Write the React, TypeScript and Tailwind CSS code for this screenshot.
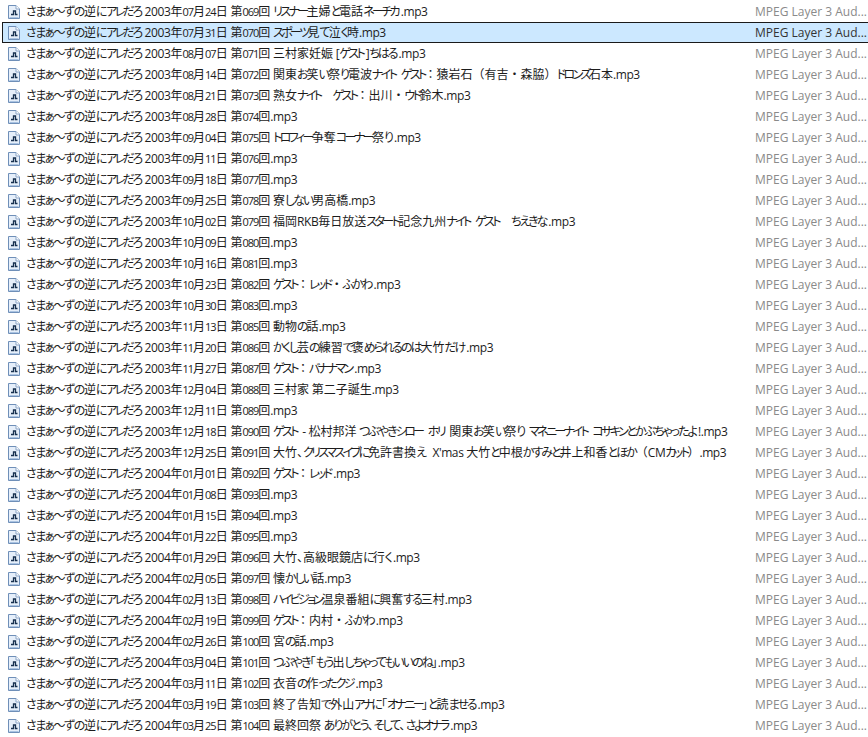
import React from "react";

const rows: [string, string, string][] = [
  ["2003年07月24日", "第069回", "リスナー主婦と電話ネーチカ"],
  ["2003年07月31日", "第070回", "スポーツ見て泣く時"],
  ["2003年08月07日", "第071回", "三村家妊娠 [ゲスト]ちはる"],
  ["2003年08月14日", "第072回", "関東お笑い祭り電波ナイト ゲスト：猿岩石（有吉・森脇）ドロンズ石本"],
  ["2003年08月21日", "第073回", "熟女ナイト　ゲスト：出川・ウド鈴木"],
  ["2003年08月28日", "第074回", ""],
  ["2003年09月04日", "第075回", "トロフィー争奪コーナー祭り"],
  ["2003年09月11日", "第076回", ""],
  ["2003年09月18日", "第077回", ""],
  ["2003年09月25日", "第078回", "寮しない男高橋"],
  ["2003年10月02日", "第079回", "福岡RKB毎日放送スタート記念九州ナイト ゲスト　ちえきな"],
  ["2003年10月09日", "第080回", ""],
  ["2003年10月16日", "第081回", ""],
  ["2003年10月23日", "第082回", "ゲスト：レッド・ふかわ"],
  ["2003年10月30日", "第083回", ""],
  ["2003年11月13日", "第085回", "動物の話"],
  ["2003年11月20日", "第086回", "かくし芸の練習で褒められるのは大竹だけ"],
  ["2003年11月27日", "第087回", "ゲスト：バナナマン"],
  ["2003年12月04日", "第088回", "三村家 第二子誕生"],
  ["2003年12月11日", "第089回", ""],
  ["2003年12月18日", "第090回", "ゲスト - 松村邦洋 つぶやきシロー ホリ 関東お笑い祭り マネニーナイト コサキンとかぶちゃったよ!"],
  ["2003年12月25日", "第091回", "大竹、クリスマスイブに免許書換え  X'mas 大竹と中根かすみと井上和香とほか（CMカット）"],
  ["2004年01月01日", "第092回", "ゲスト：レッド"],
  ["2004年01月08日", "第093回", ""],
  ["2004年01月15日", "第094回", ""],
  ["2004年01月22日", "第095回", ""],
  ["2004年01月29日", "第096回", "大竹、高級眼鏡店に行く"],
  ["2004年02月05日", "第097回", "懐かしい話"],
  ["2004年02月13日", "第098回", "ハイビジョン温泉番組に興奮する三村"],
  ["2004年02月19日", "第099回", "ゲスト：内村・ふかわ"],
  ["2004年02月26日", "第100回", "宮の話"],
  ["2004年03月04日", "第101回", "つぶやき「もう出しちゃってもいいのね」"],
  ["2004年03月11日", "第102回", "衣音の作ったクジ"],
  ["2004年03月19日", "第103回", "終了告知で外山アナに「オナニー」と読ませる"],
  ["2004年03月25日", "第104回", "最終回祭 ありがとう、そして、さよオナラ"],
];

const HIRA = "\\u3040-\\u309f〜";
const KATA = "\\u30a1-\\u30fa\\u30fc";
const PUNCT = "「」、";
const splitter = new RegExp(
  `[${HIRA}]+|[${KATA}]+|[${PUNCT}]+|[0-9]{2,}|[\\x20-\\x7e]+|[^${HIRA}${KATA}${PUNCT}\\x20-\\x7e]+`,
  "g",
);
const isHira = new RegExp(`^[${HIRA}]`);
const isKata = new RegExp(`^[${KATA}]`);
const isPunct = new RegExp(`^[${PUNCT}]`);
const isLatin = /^[\x20-\x7e]/;

// the reference font has narrow kana and digits, so each script gets its own tracking
function Narrow({ text, loose }: { text: string; loose?: boolean }) {
  const runs = text.match(splitter) ?? [];
  return (
    <>
      {runs.map((run, i) => {
        const next = runs[i + 1];
        const beforeLatin = next !== undefined && isLatin.test(next);
        let cls = "";
        if (isHira.test(run)) {
          cls = "[font-feature-settings:'palt'] " + (loose ? "tracking-[-1.4px]" : "tracking-[-2px]");
          if (beforeLatin) cls += " pr-[2px]";
        } else if (isKata.test(run)) {
          cls = "[font-feature-settings:'palt'] tracking-[-2.6px]" + (beforeLatin ? " pr-[2.6px]" : "");
        } else if (isPunct.test(run)) {
          cls = "[font-feature-settings:'palt']";
        } else if (/^[0-9]{2}/.test(run)) {
          cls = "text-[11px] tracking-[-1px]";
        } else if (isLatin.test(run)) {
          cls = "tracking-[-0.4px]";
        }
        return (
          <span key={i} className={cls}>
            {run}
          </span>
        );
      })}
    </>
  );
}

// mp3 file icon, the old explorer page with the square wave on it
function FileIcon() {
  return (
    <svg width="12" height="14" viewBox="0 0 12 14" className="shrink-0">
      <path d="M0.5 0.5H8L11.5 4V13.5H0.5Z" fill="#e6effa" stroke="#6f8fb8" />
      <path d="M8 0.5V4H11.5" fill="#ffffff" stroke="#8aa4c6" />
      <path d="M1.5 12.5H10.5" stroke="#a9c3e2" />
      <path d="M3 9.5H5.5V6H7.5V9.5H9.5" fill="none" stroke="#17304f" strokeWidth="1.3" />
    </svg>
  );
}

export default function App() {
  return (
    <div className="w-[868px] h-[737px] overflow-hidden bg-white pt-px font-['Open_Sans','Noto_Sans_CJK_JP',sans-serif] text-[12px]">
      {rows.map(([date, num, title], i) => {
        const selected = i === 1;
        return (
          <div
            key={num}
            className={
              "flex items-center h-[21px] ml-[2px] pl-[5px] -mr-px border-y border-l " +
              (selected ? "bg-[#cce8ff] border-[#1a1a1a]" : "border-transparent")
            }
          >
            <FileIcon />
            <span className="ml-[6px] w-[729px] shrink-0 whitespace-pre text-[#1c1c1c]">
              <Narrow text="さまぁ〜ずの逆にアレだろ" loose />
              <Narrow text={` ${date} ${num}${title ? " " + title : ""}.mp3`} />
            </span>
            <span className={"whitespace-pre " + (selected ? "text-[#333333]" : "text-[#8a8a8a]")}>
              MPEG Layer 3 Aud...
            </span>
          </div>
        );
      })}
    </div>
  );
}
